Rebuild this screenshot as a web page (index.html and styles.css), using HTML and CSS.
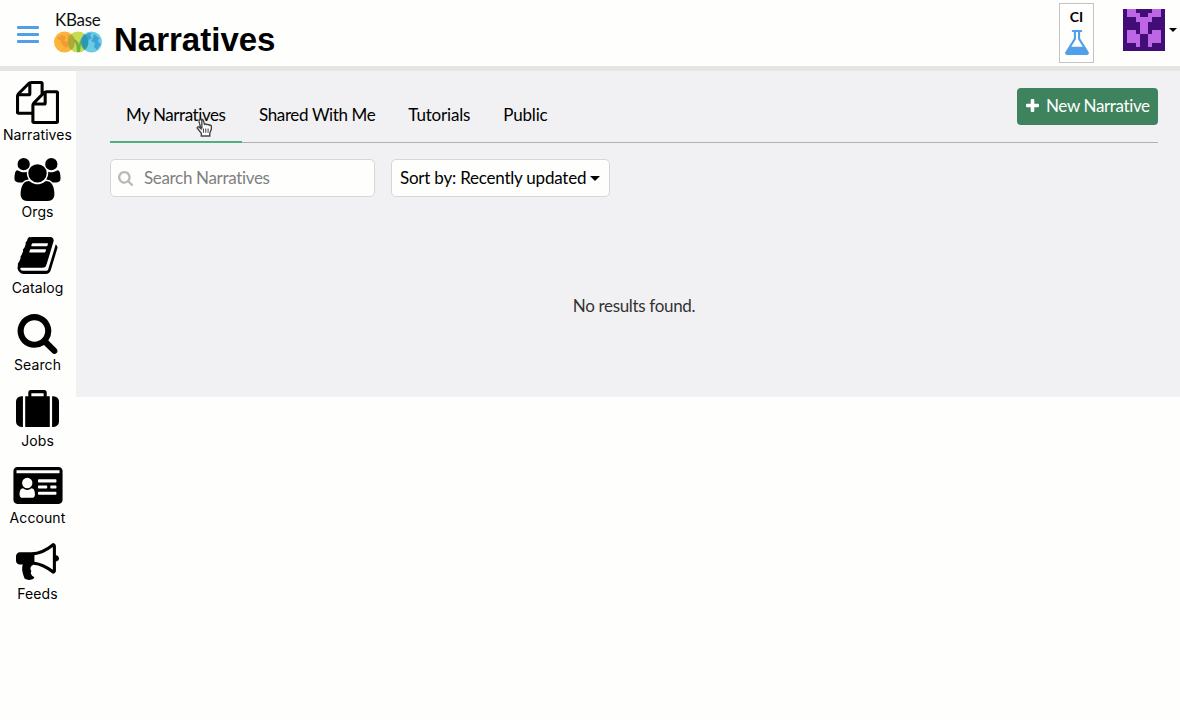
FILE: index.html
```html
<!DOCTYPE html>
<html lang="en">
<head>
<meta charset="utf-8">
<title>Narratives</title>
<link rel="stylesheet" href="styles.css">
</head>
<body>
<header class="header">
  <div class="menu"><i></i><i></i><i></i></div>
  <div class="logo">
    <span class="logo-name">KBase</span>
    <svg class="logo-globes" viewBox="0 0 48 22">
      <circle cx="10.5" cy="11" r="10.5" fill="#fbb53c"/>
      <path d="M3 7l5-3 4 2-2 4 5 1-2 6-5-3-1-4zM12 3l5 2-1 3z" fill="#f58a2c" opacity=".65"/>
      <circle cx="24" cy="11" r="10.5" fill="#c5db51"/>
      <path d="M17.250 3A10.500 10.500 0 0 1 17.250 19A10.500 10.500 0 0 1 17.250 3z" fill="#b3a833"/>
      <path d="M23 21q0-9-4-13 5 1 6 6 1-7 5-9-3 5-4 16z" fill="#5ba83a" opacity=".8"/>
      <circle cx="37.500" cy="11" r="10.500" fill="#6ecbe5"/>
      <path d="M30.750 3A10.500 10.500 0 0 1 30.750 19A10.500 10.500 0 0 1 30.750 3z" fill="#2f9aa5"/>
      <path d="M35 2q-5 2-7 6l1 4 5 2-1-4 5-3-2-3 2-2zM40 3l5 4-1 4 3 2-4 6-3-3 1-4-4-2 2-3z" fill="#2a93c9" opacity=".7"/>
    </svg>
  </div>
  <h1 class="title">Narratives</h1>
  <div class="env">
    <b>CI</b>
    <svg viewBox="165 128 1462 1536"><path d="M1591 1448q56 89 21.500 152.500t-140.500 63.500h-1152q-106 0-140.500-63.500t21.500-152.500l503-793v-399h-64q-26 0-45-19t-19-45 19-45 45-19h512q26 0 45 19t19 45-19 45-45 19h-64v399zm-779-725l-272 429h712l-272-429-20-31v-436h-128v436z"/></svg>
  </div>
  <svg class="avatar" viewBox="0 0 10 10" shape-rendering="crispEdges">
    <path fill="#430d78" d="M0 0h10v10H0z"/>
    <path fill="#bd66e6" d="M1 0h2v1h1v1h2V1h1V0h2v2H7v1H6v3H4V3H3V2H1zM1 5h2v1h1v3H3V8H1zM7 5h2v3H7v1H6V6h1z"/>
  </svg>
  <span class="caret header-caret"></span>
</header>
<div class="body">
  <nav class="sidebar">
    <a class="nav-item"><svg class="icon" viewBox="0 0 1792 1792"><path d="M1696 384q40 0 68 28t28 68v1216q0 40-28 68t-68 28h-960q-40 0-68-28t-28-68v-288h-544q-40 0-68-28t-28-68v-672q0-40 20-88t48-76l408-408q28-28 76-48t88-20h416q40 0 68 28t28 68v328q68-40 128-40h416zm-544 213l-299 299h299v-299zm-640-384l-299 299h299v-299zm196 647l316-316v-416h-384v416q0 40-28 68t-68 28h-416v640h512v-256q0-40 20-88t48-76zm956 804v-1152h-384v416q0 40-28 68t-68 28h-416v640h896z"/></svg><span>Narratives</span></a>
    <a class="nav-item"><svg class="icon wide" viewBox="0 0 1920 1792"><path d="M593 896q-162 5-265 128h-134q-82 0-138-40.500t-56-118.500q0-353 124-353 6 0 43.500 21t97.500 42.500 119 21.500q67 0 133-23-5 37-5 66 0 139 81 256zm1071 637q0 120-73 189.500t-194 69.500h-874q-121 0-194-69.500t-73-189.500q0-53 3.500-103.500t14-109 26.500-108.500 43-97.500 62-81 85.500-53.500 111.500-20q10 0 43 21.500t73 48 107 48 135 21.500 135-21.500 107-48 73-48 43-21.500q61 0 111.500 20t85.500 53.500 62 81 43 97.500 26.500 108.500 14 109 3.500 103.500zm-1024-1277q0 106-75 181t-181 75-181-75-75-181 75-181 181-75 181 75 75 181zm704 384q0 159-112.500 271.500t-271.500 112.500-271.500-112.500-112.500-271.500 112.500-271.500 271.500-112.500 271.500 112.500 112.500 271.500zm576 225q0 78-56 118.500t-138 40.500h-134q-103-123-265-128 81-117 81-256 0-29-5-66 66 23 133 23 59 0 119-21.500t97.500-42.500 43.500-21q124 0 124 353zm-128-609q0 106-75 181t-181 75-181-75-75-181 75-181 181-75 181 75 75 181z"/></svg><span>Orgs</span></a>
    <a class="nav-item"><svg class="icon" viewBox="0 0 1792 1792"><path d="M1703 478q40 57 18 129l-275 906q-19 64-76.500 107.500t-122.500 43.500h-923q-77 0-148.500-53.500t-99.500-131.500q-24-67-2-127 0-4 3-27t4-37q1-8-3-21.500t-3-19.500q2-11 8-21t16.500-23.500 16.500-23.500q23-38 45-91.500t30-91.500q3-10 .5-30t-.5-28q3-11 17-28t17-23q21-36 42-92t25-90q1-9-2.500-32t.5-28q4-13 22-30.500t22-22.500q19-26 42.500-84.500t27.500-96.500q1-8-3-25.500t-2-26.500q2-8 9-18t18-23 17-21q8-12 16.500-30.500t15-35 16-36 19.500-32 26.500-23.500 36-11.500 47.500 5.500l-1 3q38-9 51-9h761q74 0 114 56t18 130l-274 906q-36 119-71.500 153.500t-128.500 34.500h-869q-27 0-38 15-11 16-1 43 24 70 144 70h923q29 0 56-15.500t35-41.500l300-987q7-22 5-57 38 15 59 43zm-1064 2q-4 13 2 22.500t20 9.500h608q13 0 25.500-9.500t16.500-22.500l21-64q4-13-2-22.500t-20-9.500h-608q-13 0-25.500 9.500t-16.500 22.500zm-83 256q-4 13 2 22.500t20 9.500h608q13 0 25.500-9.500t16.500-22.500l21-64q4-13-2-22.500t-20-9.500h-608q-13 0-25.500 9.500t-16.500 22.500z"/></svg><span>Catalog</span></a>
    <a class="nav-item"><svg class="icon" viewBox="0 0 1792 1792"><path d="M1216 832q0-185-131.500-316.500t-316.500-131.500-316.500 131.500-131.500 316.500 131.500 316.500 316.500 131.500 316.500-131.500 131.500-316.500zm512 832q0 52-38 90t-90 38q-54 0-90-38l-343-342q-179 124-399 124-143 0-273.500-55.500t-225-150-150-225-55.500-273.500 55.500-273.500 150-225 225-150 273.500-55.500 273.500 55.500 225 150 150 225 55.500 273.500q0 220-124 399l343 343q37 37 37 90z"/></svg><span>Search</span></a>
    <a class="nav-item"><svg class="icon" viewBox="0 0 1792 1792"><path d="M640 384h512v-128h-512v128zm-352 0v1280h-64q-92 0-158-66t-66-158v-832q0-92 66-158t158-66h64zm1120 0v1280h-1024v-1280h128v-160q0-40 28-68t68-28h576q40 0 68 28t28 68v160h128zm384 224v832q0 92-66 158t-158 66h-64v-1280h64q92 0 158 66t66 158z"/></svg><span>Jobs</span></a>
    <a class="nav-item"><svg class="icon wider" viewBox="0 0 2048 1792"><path fill-rule="evenodd" d="M160 128h1728q66 0 113 47t47 113v1216q0 66-47 113t-113 47H160q-66 0-113-47t-47-113V288q0-66 47-113t113-47zM128 256v128h1792V256zM384 1408h384c80 0 128-50 128-130 0-150-40-265-147-265-30 25-90 67-173 67s-143-42-173-67c-107 0-147 115-147 265 0 80 48 130 128 130zM576 576a215 215 0 1 0 0 430 215 215 0 1 0 0-430zM1056 640h704q32 0 32 32v64q0 32-32 32h-704q-32 0-32-32v-64q0-32 32-32zM1056 896h320q32 0 32 32v64q0 32-32 32h-320q-32 0-32-32v-64q0-32 32-32zM1568 896h192q32 0 32 32v64q0 32-32 32h-192q-32 0-32-32v-64q0-32 32-32zM1056 1152h704q32 0 32 32v64q0 32-32 32h-704q-32 0-32-32v-64q0-32 32-32z"/></svg><span>Account</span></a>
    <a class="nav-item"><svg class="icon" viewBox="0 0 1792 1792"><path d="M1664 640q53 0 90.500 37.500t37.500 90.500-37.500 90.500-90.500 37.500v384q0 52-38 90t-90 38q-417-347-812-380-58 19-91 66t-31 100.500 40 92.500q-20 33-23 65.500t6 58 33.500 55 48 50 61.500 50.500q-29 58-111.500 83t-168.500 11.500-132-55.500q-7-23-29.500-87.500t-32-94.500-23-89-15-101 3.500-98.500 22-110.500h-122q-66 0-113-47t-47-113v-192q0-66 47-113t113-47h480q435 0 896-384 52 0 90 38t38 90v384zm-128 604v-954q-394 302-768 343v270q377 42 768 341z"/></svg><span>Feeds</span></a>
  </nav>
  <main class="main">
    <div class="tabbar">
      <a class="tab active">My Narratives
        <svg class="pointer" viewBox="0 0 16 18"><path d="M5.500 10V3q0-1.500-1.500-1.500T2.800 3l1.700 7-1.800-1.500Q1 8 1 9.500l4 5V17h8v-2.500l1.500-4V7.500q-.7-1.300-2-.6-.8-1.300-2.200-.6-1-1-2.300-.3L7 2.500Q6.500.8 4.500 1.300" fill="#fff" stroke="#444" stroke-width="1.300"/><path d="M7 10v4M9.200 10v4M11.400 10v4" stroke="#444" fill="none"/></svg>
      </a>
      <a class="tab shared">Shared With Me</a>
      <a class="tab">Tutorials</a>
      <a class="tab">Public</a>
      <button class="new"><svg viewBox="0 0 13 13"><path d="M4.700 1q0-1 1-1h1.600q1 0 1 1v3.700H12q1 0 1 1v1.600q0 1-1 1H8.300V12q0 1-1 1H5.700q-1 0-1-1V8.300H1q-1 0-1-1V5.700q0-1 1-1h3.700z"/></svg><span>New Narrative</span></button>
    </div>
    <div class="filters">
      <div class="field search"><svg viewBox="64 128 1664 1664"><path d="M1216 832q0-185-131.500-316.500t-316.500-131.500-316.500 131.500-131.500 316.500 131.500 316.500 316.500 131.500 316.500-131.500 131.500-316.500zm512 832q0 52-38 90t-90 38q-54 0-90-38l-343-342q-179 124-399 124-143 0-273.500-55.500t-225-150-150-225-55.500-273.500 55.500-273.500 150-225 225-150 273.500-55.500 273.500 55.500 225 150 150 225 55.500 273.500q0 220-124 399l343 343q37 37 37 90z"/></svg><span>Search Narratives</span></div>
      <div class="field sort"><span>Sort by: Recently updated</span><i class="caret"></i></div>
    </div>
    <p class="empty">No results found.</p>
  </main>
</div>
</body>
</html>
```
FILE: styles.css
```css
* { box-sizing: border-box; }
body { margin: 0; height: 720px; overflow: hidden; background: #fefefd; color: #000; font-family: Lato, sans-serif; font-size: 17px; }
.header { display: flex; align-items: flex-start; height: 71px; border-bottom: 5px solid #e5e5e4; padding-left: 17px; }
.menu { display: flex; flex-direction: column; gap: 4px; margin-top: 26px; width: 22px; }
.menu i { height: 3px; border-radius: 1px; background: #519fe9; }
.logo { display: flex; flex-direction: column; width: 48px; margin: 10px 0 0 15px; }
.logo-name { height: 21px; padding-left: 1px; font-size: 17px; line-height: 20px; letter-spacing: -0.3px; color: #111; }
.logo-globes { width: 48px; height: 22px; }
.title { margin: 21px 0 0 12px; font: bold 33px/38px "Liberation Sans", sans-serif; }
.env { display: flex; flex-direction: column; align-items: center; width: 35px; height: 60px; margin: 3px 29px 0 auto; border: 1px solid #c4c4c4; font: 14px/16px Lato, sans-serif; padding-top: 5px; }
.env svg { width: 24px; height: 25px; margin-top: 5px; fill: #519fe9; }
.avatar { width: 42px; height: 42px; margin-top: 9px; }
.caret { border: 5px solid transparent; border-top-color: #000; border-bottom: 0; }
.header-caret { margin: 28px 3px 0 4px; border-width: 4px 4px 0; }
.body { display: flex; align-items: flex-start; }
.sidebar { width: 76px; padding-top: 10px; flex: none; }
.nav-item { display: flex; flex-direction: column; align-items: center; width: 75px; height: 76.500px; font: 14px/22px Inter, sans-serif; letter-spacing: 0.100px; }
.icon { width: 43px; height: 43px; flex: none; }
.icon.wide { width: 47px; }
.icon.wider { width: 50px; }
.main { flex: 1; height: 326px; padding: 17px 22px 0 34px; background: #f1f1f3; }
.tabbar { display: flex; height: 55px; border-bottom: 1px solid #b1b1b3; }
.tab { position: relative; height: 55px; padding: 16px 16px 0; line-height: 22px; margin-right: 1px; white-space: nowrap; letter-spacing: -0.180px; }
.active { width: 132px; border-bottom: 2px solid #50ae80; letter-spacing: -0.430px; }
.shared { letter-spacing: -0.370px; }
.pointer { position: absolute; left: 86px; top: 30px; width: 17px; height: 19px; }
.new { display: flex; align-items: center; gap: 7px; width: 141px; height: 37px; margin-left: auto; padding: 0 9px 2px; border: 0; border-radius: 4px; background: #3e835d; color: #fff; font: 17px/22px Lato, sans-serif; letter-spacing: -0.360px; white-space: nowrap; }
.new svg { width: 13px; height: 13px; fill: #fff; flex: none; }
.filters { display: flex; gap: 16px; margin-top: 16px; }
.field { display: flex; align-items: center; height: 38px; padding-bottom: 1px; border: 1px solid #d6d6d8; border-radius: 5px; background: #fefefd; white-space: nowrap; }
.search { width: 265px; padding-left: 7px; gap: 11px; color: #808080; letter-spacing: -0.330px; }
.search svg { width: 15px; height: 15px; margin-top: 1px; fill: #b9b9b9; }
.sort { width: 219px; padding-left: 8px; gap: 4px; letter-spacing: -0.220px; }
.sort .caret { margin-top: 2px; }
.empty { margin: 98px 0 0; text-align: center; line-height: 22px; color: #333; letter-spacing: -0.330px; }
```
